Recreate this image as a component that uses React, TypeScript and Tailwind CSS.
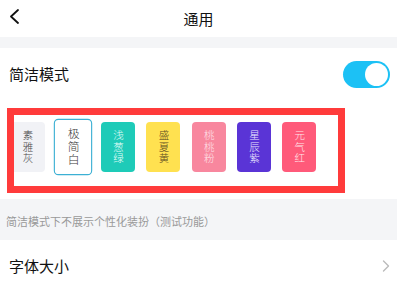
import React from "react";

interface Skin {
  name: string;
  bg: string;
  text: string;
  selected?: boolean;
}

const skins: Skin[] = [
  { name: "素雅灰", bg: "bg-[#f1f2f6]", text: "text-[#4a4a4a]" },
  { name: "极简白", bg: "bg-white", text: "text-[#3a3a3a]", selected: true },
  { name: "浅葱绿", bg: "bg-[#1ecbb8]", text: "text-[#e8fffb]" },
  { name: "盛夏黄", bg: "bg-[#ffe150]", text: "text-[#5b4a22]" },
  { name: "桃桃粉", bg: "bg-[#f8879e]", text: "text-[#ffe3ea]" },
  { name: "星辰紫", bg: "bg-[#5a34d6]", text: "text-[#ece8ff]" },
  { name: "元气红", bg: "bg-[#ff5a7a]", text: "text-[#ffe6ea]" },
];

const font = { fontFamily: '"Noto Sans CJK SC", "Noto Sans", sans-serif' };

const App = () => {
  return (
    <div className="w-[397px] h-[292px] overflow-hidden bg-white" style={font}>
      {/* Header */}
      <div className="relative h-[37px] flex items-center justify-center">
        <svg
          className="absolute left-[9px] top-[9px]"
          width="11"
          height="15"
          viewBox="0 0 11 15"
          fill="none"
          stroke="#111"
          strokeWidth="1.8"
          strokeLinecap="round"
          strokeLinejoin="round"
        >
          <polyline points="9,1 2,7.5 9,14" />
        </svg>
        <span className="text-[15px] text-[#111] mt-[1px]">通用</span>
      </div>

      <div className="h-[11px] bg-[#f4f5f7]" />

      {/* Simple mode row */}
      <div className="h-[52px] flex items-center justify-between pl-[9px] pr-[7px]">
        <span className="text-[15px] text-[#111]">简洁模式</span>
        <div className="w-[47px] h-[27px] rounded-full bg-[#1cc1f5] flex items-center justify-end p-[2px]">
          <div className="w-[23px] h-[23px] rounded-full bg-white" />
        </div>
      </div>

      {/* Skins */}
      <div className="pt-[8px] pb-[6px]">
        <div className="ml-[7px] w-[338px] h-[85px] border-[7px] border-[#ff3b3b] overflow-hidden">
          <div className="flex gap-[11.3px] -ml-[3.5px] pt-[7px]">
            {skins.map((s) => (
              <div
                key={s.name}
                className={`shrink-0 w-[34px] h-[50px] rounded-[4px] flex items-center justify-center ${s.bg} ${
                  s.selected ? "border-[1.5px] border-[#3cb0d4] scale-[1.13]" : ""
                }`}
              >
                <span
                  className={`[writing-mode:vertical-rl] text-[10.5px] leading-[12px] tracking-[1px] font-light ${s.text}`}
                >
                  {s.name}
                </span>
              </div>
            ))}
          </div>
        </div>
      </div>

      {/* Caption */}
      <div className="h-[41px] bg-[#f4f5f7] pl-[6px] pt-[8px]">
        <span className="text-[11px] leading-[14px] text-[#999]">简洁模式下不展示个性化装扮（测试功能）</span>
      </div>

      {/* Font size row */}
      <div className="h-[52px] flex items-center justify-between pl-[9px] pr-[7px]">
        <span className="text-[15px] text-[#111]">字体大小</span>
        <svg width="8" height="12" viewBox="0 0 8 12" fill="none" stroke="#bbb" strokeWidth="1.4" strokeLinecap="round" strokeLinejoin="round">
          <polyline points="1.5,1 6.5,6 1.5,11" />
        </svg>
      </div>
    </div>
  );
};

export default App;
